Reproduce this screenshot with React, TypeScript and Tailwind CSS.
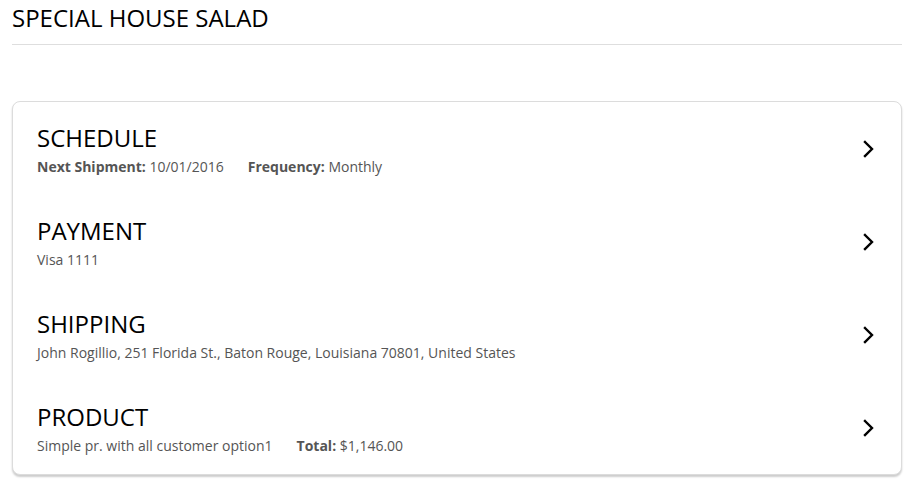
import React from 'react';

type Row = {
  title: string;
  parts: { label?: string; value: string }[];
};

const rows: Row[] = [
  {
    title: 'SCHEDULE',
    parts: [
      { label: 'Next Shipment:', value: '10/01/2016' },
      { label: 'Frequency:', value: 'Monthly' },
    ],
  },
  { title: 'PAYMENT', parts: [{ value: 'Visa 1111' }] },
  {
    title: 'SHIPPING',
    parts: [{ value: 'John Rogillio, 251 Florida St., Baton Rouge, Louisiana 70801, United States' }],
  },
  {
    title: 'PRODUCT',
    parts: [
      { value: 'Simple pr. with all customer option1' },
      { label: 'Total:', value: '$1,146.00' },
    ],
  },
];

const Chevron = () => (
  <svg width="12" height="18" viewBox="0 0 12 18" fill="none">
    <path d="M2 2 L9 9 L2 16" stroke="#000" strokeWidth="2.4" strokeLinecap="square" strokeLinejoin="miter" />
  </svg>
);

export default function App() {
  return (
    <div className="min-h-screen bg-white px-3 font-['Open_Sans',sans-serif]">
      {/* Page heading */}
      <h1 className="pt-[2px] text-[24px] leading-[32px] text-black">SPECIAL HOUSE SALAD</h1>
      <div className="mt-[10px] border-b border-[#dedede]" />

      {/* Summary card */}
      <div className="mt-[56px] rounded-lg border border-[#dcdcdc] bg-white shadow-[0_2px_2px_rgba(0,0,0,0.2)]">
        {rows.map((row) => (
          <div key={row.title} className="flex h-[93px] items-center pl-6 pr-[26px]">
            <div className="flex flex-1 flex-col gap-[3px] self-start pt-[20px]">
              <div className="text-[24px] leading-[32px] text-black">{row.title}</div>
              <div className="flex gap-6 text-[14px] leading-[20px] text-[#555]">
                {row.parts.map((p, i) => (
                  <span key={i}>
                    {p.label && <b className="font-bold">{p.label} </b>}
                    {p.value}
                  </span>
                ))}
              </div>
            </div>
            <Chevron />
          </div>
        ))}
      </div>
    </div>
  );
}
